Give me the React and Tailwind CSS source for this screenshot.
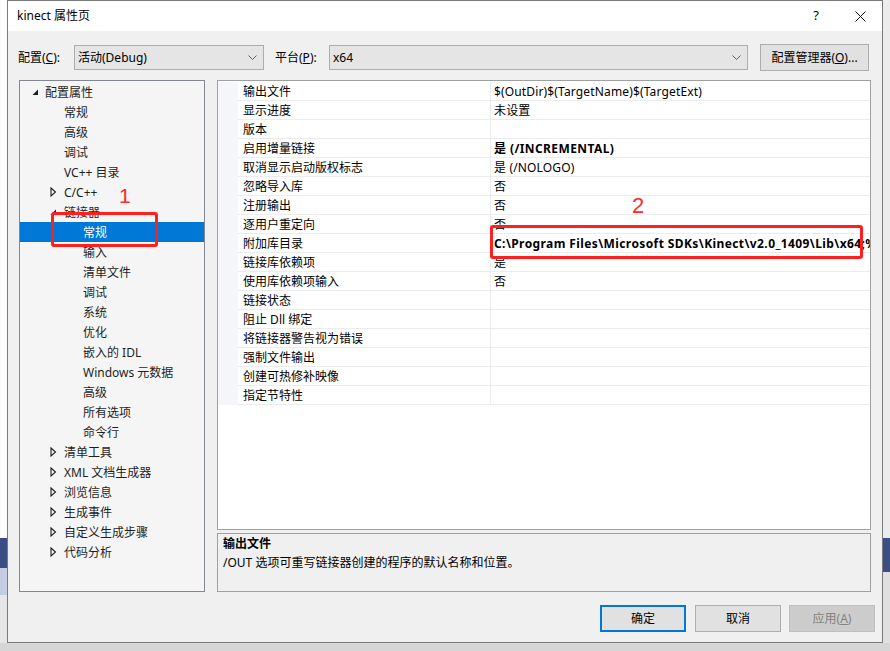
import React from "react";

const F = { fontFamily: '"Segoe UI","Noto Sans","Noto Sans CJK SC",sans-serif' };

function Chevron() {
  return (
    <svg width="9" height="6" viewBox="0 0 9 6">
      <polyline points="0.5,0.5 4.5,4.5 8.5,0.5" fill="none" stroke="#606060" strokeWidth="1" />
    </svg>
  );
}

function ArrowOpen() {
  return (
    <svg width="7" height="7" viewBox="0 0 7 7">
      <polygon points="6,0.5 6,6 0.5,6" fill="#1e1e1e" />
    </svg>
  );
}

function ArrowClosed() {
  return (
    <svg width="7" height="10" viewBox="0 0 7 10">
      <polygon points="1,1 5.5,5 1,9" fill="none" stroke="#1e1e1e" strokeWidth="1.1" />
    </svg>
  );
}

const tree = [
  { t: "配置属性", lv: 0, a: "open" },
  { t: "常规", lv: 1 },
  { t: "高级", lv: 1 },
  { t: "调试", lv: 1 },
  { t: "VC++ 目录", lv: 1 },
  { t: "C/C++", lv: 1, a: "closed" },
  { t: "链接器", lv: 1, a: "open" },
  { t: "常规", lv: 2, sel: true },
  { t: "输入", lv: 2 },
  { t: "清单文件", lv: 2 },
  { t: "调试", lv: 2 },
  { t: "系统", lv: 2 },
  { t: "优化", lv: 2 },
  { t: "嵌入的 IDL", lv: 2 },
  { t: "Windows 元数据", lv: 2 },
  { t: "高级", lv: 2 },
  { t: "所有选项", lv: 2 },
  { t: "命令行", lv: 2 },
  { t: "清单工具", lv: 1, a: "closed" },
  { t: "XML 文档生成器", lv: 1, a: "closed" },
  { t: "浏览信息", lv: 1, a: "closed" },
  { t: "生成事件", lv: 1, a: "closed" },
  { t: "自定义生成步骤", lv: 1, a: "closed" },
  { t: "代码分析", lv: 1, a: "closed" },
];

const rows = [
  ["输出文件", "$(OutDir)$(TargetName)$(TargetExt)"],
  ["显示进度", "未设置"],
  ["版本", ""],
  ["启用增量链接", "是 (/INCREMENTAL)", "b1"],
  ["取消显示启动版权标志", "是 (/NOLOGO)"],
  ["忽略导入库", "否"],
  ["注册输出", "否"],
  ["逐用户重定向", "否"],
  ["附加库目录", "C:\\Program Files\\Microsoft SDKs\\Kinect\\v2.0_1409\\Lib\\x64;%", "b2"],
  ["链接库依赖项", "是"],
  ["使用库依赖项输入", "否"],
  ["链接状态", ""],
  ["阻止 Dll 绑定", ""],
  ["将链接器警告视为错误", ""],
  ["强制文件输出", ""],
  ["创建可热修补映像", ""],
  ["指定节特性", ""],
];

function TreeRow({ r }) {
  const textPad = r.lv === 0 ? "pl-[25px]" : r.lv === 1 ? "pl-[44px]" : "pl-[63px]";
  return (
    <div className={"relative h-[20px] shrink-0 flex items-center pt-[2px] whitespace-nowrap " + (r.sel ? "bg-[#0078d7] text-white" : "text-[#1e1e1e]")}>
      {r.a === "open" && (
        <div className={"absolute top-[7px] " + (r.lv === 0 ? "left-[12px]" : "left-[30px]")}>
          <ArrowOpen />
        </div>
      )}
      {r.a === "closed" && (
        <div className="absolute top-[5px] left-[30px]">
          <ArrowClosed />
        </div>
      )}
      <span className={textPad}>{r.t}</span>
    </div>
  );
}

function GridRow({ r }) {
  const extra = r[2] === "b1" ? "font-bold tracking-[0.4px]" : r[2] === "b2" ? "font-bold tracking-[0.4px]" : "tracking-[0.15px]";
  return (
    <div className="flex h-[19px] shrink-0">
      <div className="w-[20px] bg-[#f4f6f9] shrink-0" />
      <div className="w-[253px] shrink-0 border-b border-r border-[#ececec] pl-[5px] pt-[2px] flex items-center whitespace-nowrap overflow-hidden">
        {r[0]}
      </div>
      <div className={"flex-1 min-w-0 border-b border-[#ececec] pl-[3px] pt-[2px] flex items-center whitespace-nowrap overflow-hidden " + extra}>
        {r[1]}
      </div>
    </div>
  );
}

export default function App() {
  return (
    <div className="relative w-[890px] h-[651px] flex flex-col bg-[#d9d9d9] overflow-hidden text-[12px] text-black" style={F}>
      <div className="flex h-[643px] shrink-0">
        {/* left background strip (editor behind) */}
        <div className="w-[7px] shrink-0 flex flex-col bg-white">
          <div className="h-[538px] bg-[#fbfbfb]" />
          <div className="h-[30px] bg-[#3c4f85]" />
          <div className="h-[27px] bg-[#c4cce4]" />
          <div className="flex-1 bg-[#e6e6e6]" />
        </div>
        {/* window */}
        <div className="w-[876px] shrink-0 flex flex-col border border-[#7a7a7a] bg-[#f0f0f0]">
          {/* title bar */}
          <div className="h-[30px] shrink-0 bg-white flex items-center pl-[9px] pr-[16px]">
            <span className="flex-1">kinect 属性页</span>
            <span className="mr-[36px] text-[13px]">?</span>
            <svg width="11" height="11" viewBox="0 0 11 11">
              <line x1="0.5" y1="0.5" x2="10.5" y2="10.5" stroke="#111" strokeWidth="1" />
              <line x1="10.5" y1="0.5" x2="0.5" y2="10.5" stroke="#111" strokeWidth="1" />
            </svg>
          </div>
          {/* toolbar */}
          <div className="mt-[14px] h-[25px] shrink-0 flex items-center pl-[10px]">
            <span className="w-[56px]">配置(<u>C</u>):</span>
            <div className="w-[190px] h-[25px] border border-[#adadad] bg-[#e5e5e5] flex items-center pl-[3px] pr-[6px]">
              <span className="flex-1">活动(Debug)</span>
              <Chevron />
            </div>
            <span className="ml-[11px] w-[54px]">平台(<u>P</u>):</span>
            <div className="w-[419px] h-[25px] border border-[#adadad] bg-[#e5e5e5] flex items-center pl-[3px] pr-[6px]">
              <span className="flex-1">x64</span>
              <Chevron />
            </div>
            <div className="ml-[12px] w-[109px] h-[27px] border border-[#adadad] bg-[#e1e1e1] flex items-center justify-center">
              配置管理器(<u>O</u>)...
            </div>
          </div>
          {/* main */}
          <div className="mt-[10px] h-[512px] shrink-0 flex pl-[11px]">
            <div className="w-[186px] h-[512px] border border-[#828790] bg-[#f5f5f5] flex flex-col pt-[1px]">
              {tree.map((r, i) => (
                <TreeRow key={i} r={r} />
              ))}
            </div>
            <div className="ml-[12px] w-[654px] flex flex-col">
              <div className="h-[450px] border border-[#a0a0a0] bg-white flex flex-col overflow-hidden pt-[1px]">
                {rows.map((r, i) => (
                  <GridRow key={i} r={r} />
                ))}
              </div>
              <div className="mt-[3px] h-[59px] border border-[#a0a0a0] bg-[#f0f0f0] pl-[5px] flex flex-col">
                <div className="font-bold h-[19px] flex items-center">输出文件</div>
                <div className="h-[19px] flex items-center">/OUT 选项可重写链接器创建的程序的默认名称和位置。</div>
              </div>
            </div>
          </div>
          {/* buttons */}
          <div className="mt-[13px] h-[27px] shrink-0 flex pl-[592px]">
            <div className="w-[86px] h-[27px] border-2 border-[#0078d7] bg-[#e1e1e1] flex items-center justify-center">确定</div>
            <div className="ml-[9px] w-[86px] h-[27px] border border-[#adadad] bg-[#e1e1e1] flex items-center justify-center">取消</div>
            <div className="ml-[8px] w-[86px] h-[27px] border border-[#bfbfbf] bg-[#cccccc] text-[#838383] flex items-center justify-center">应用(<u>A</u>)</div>
          </div>
        </div>
        {/* right background strip */}
        <div className="flex-1 flex flex-col bg-[#e3e3e3]">
          <div className="h-[538px] bg-[#ececec]" />
          <div className="h-[34px] bg-[#3c4f85]" />
          <div className="flex-1 bg-[#e0e0e0]" />
        </div>
      </div>
      <div className="flex-1 bg-[#d6d6d6]" />

      {/* annotations */}
      <div className="absolute left-[51px] top-[212px] w-[107px] h-[35px] border-[3px] border-[#ff1f1f] rounded-[3px]" />
      <div className="absolute left-[119px] top-[185px] text-[21px] leading-none text-[#ff2a2a]" style={{ fontFamily: '"Liberation Sans",sans-serif' }}>1</div>
      <div className="absolute left-[490px] top-[225px] w-[373px] h-[34px] border-[3px] border-[#ff1f1f] rounded-[3px]" />
      <div className="absolute left-[632px] top-[195px] text-[22px] leading-none text-[#ff2a2a]" style={{ fontFamily: '"Liberation Sans",sans-serif' }}>2</div>
    </div>
  );
}
